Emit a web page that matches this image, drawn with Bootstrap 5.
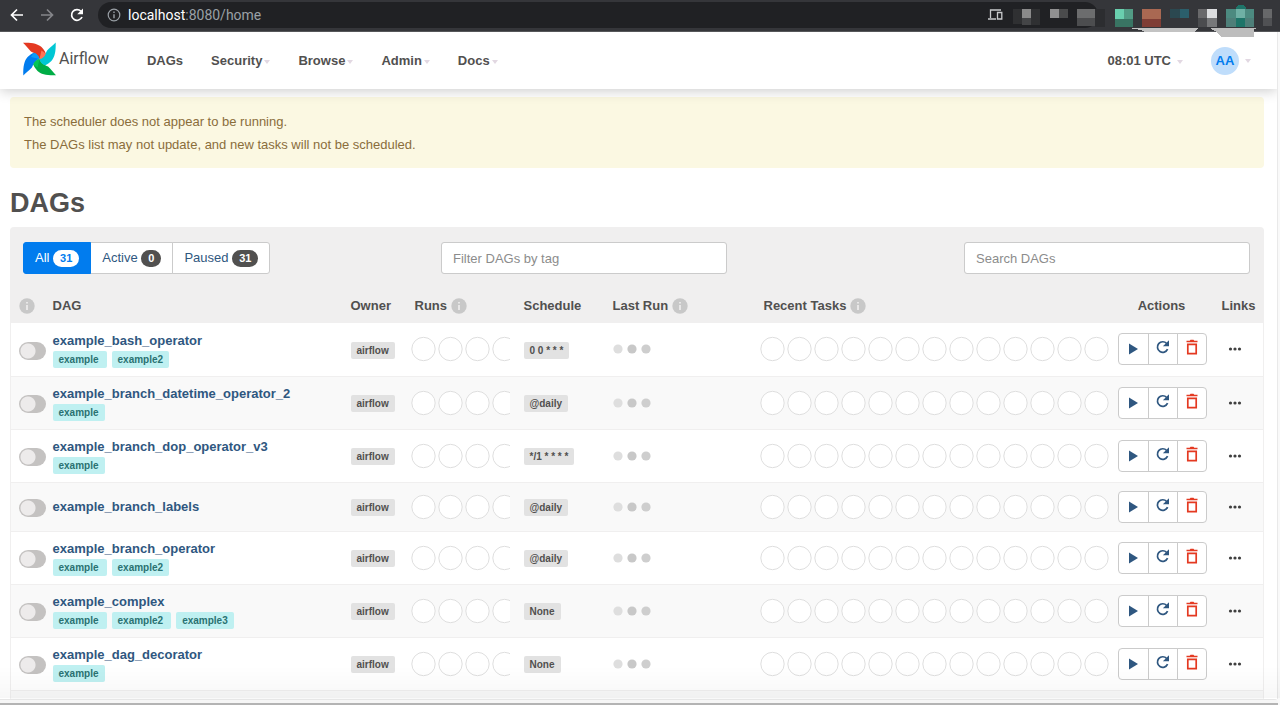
<!DOCTYPE html>
<html lang="en">
<head>
<meta charset="utf-8">
<meta name="viewport" content="width=device-width, initial-scale=1">
<title>DAGs - Airflow</title>
<link href="https://cdn.jsdelivr.net/npm/bootstrap@5.3.0/dist/css/bootstrap.min.css" rel="stylesheet">
<style>
  body { font-family: "Liberation Sans", Arial, sans-serif; font-size: 13px; line-height: 18px; color: #51504f; background: #f9f9f9; }
  a { color: #2f5780; text-decoration: none; }

  /* browser bar */
  .browser-bar { height: 32px; background: #35363a; padding-left: 9px; border-bottom: 1px solid #56575a; }
  .browser-bar .tool { border: 0; background: none; padding: 0; width: 16px; height: 16px; line-height: 0; }
  .address { background: #202124; border-radius: 13px; height: 26px; margin: 2px 182px 2px 13px; padding: 0 95px 0 9px; }
  .url-text { font: 14px/18px Roboto, sans-serif; color: #9aa0a6; margin-left: 7px; }
  .url-text b { color: #fff; font-weight: 400; }
  .extensions { top: 0; right: 0; z-index: 1040; }

  /* page frame */
  .page { margin-right: 2px; border-right: 1px solid #e9e9e9; background: #fff; }
  .topbar { height: 57px; padding: 0 12px 0 23px; background: #fff; box-shadow: 0 2px 12px rgba(0,0,0,.2); z-index: 10; clip-path: inset(0 0 -16px 0); }
  .topbar .navbar-brand { font: 16px/20px Roboto, sans-serif; color: #51504f; margin-right: 24px; padding: 0 0 4px; gap: 3px; }
  .topbar .navbar-nav .nav-link { color: #51504f; font-weight: 700; padding: 0 14px; }
  .topbar .dropdown-toggle::after { border-top: 4px solid #e2d8e2; border-left: 3px solid transparent; border-right: 3px solid transparent; margin-left: 2px; vertical-align: 1px; }
  .topbar .account .dropdown-toggle::after { margin-left: 6px; }
  .avatar { width: 28px; height: 28px; border-radius: 50%; background: #bfddfb; color: #017cee; }
  .content-area { padding: 8px 13px 0 10px; }
  .notice { background: #fbf8e2; color: #8a6d3b; border-radius: 4px; padding: 13px 14px 12px; line-height: 23px; }
  .page-title { font-size: 27px; line-height: 30px; font-weight: 700; margin: 20px 0 9px; color: #51504f; }

  /* list panel */
  .panel-box { background: #f0efef; border-radius: 4px 4px 0 0; }
  .filters { padding: 15px 0 14px; }
  .filters > div { padding: 0 14px 0 13px; }
  .filters .form-control { width: 286px; height: 32px; font-size: 13px; line-height: 18px; padding: 6px 11px; border-color: #cbcbcb; border-radius: 3px; }
  .filters .form-control::placeholder { color: #8c8c8c; }
  .filters .btn { font-size: 13px; line-height: 18px; padding: 6px 11px; border: 1px solid #cbcbcb; border-radius: 3px; background: #fff; color: #2f5780; height: 32px; white-space: nowrap; }
  .filters .btn.active { background: #017cee; border-color: #017cee; color: #fff; }
  .filters .badge { background: #51504f; color: #fff; font-size: 11px; line-height: 17px; padding: 0 7px; border-radius: 9px; top: 0; }
  .filters .btn.active .badge { background: #fff; color: #017cee; }

  .dag-table { table-layout: fixed; border-left: 1px solid #f0efef; border-right: 1px solid #f0efef; color: #51504f; }
  .dag-table th, .dag-table td { padding: 0 8px; vertical-align: middle; }
  .dag-table thead th { background: #f0efef; height: 35px; font-weight: 700; white-space: nowrap; }
  .dag-table tbody tr { height: 53px; background: #fff; border-bottom: 1px solid #f0efef; }
  .dag-table tbody tr:nth-child(even) { background: #f9f9f9; }
  .dag-table tbody tr.untagged { height: 49px; }
  .dag-table tbody tr.next-row { height: 9px; border: 0; }
  .dag-table svg { display: block; }
  .dag-name { font-weight: 700; display: block; margin-top: 1px; }
  .tag-label, .chip { display: inline-block; font-size: 10px; line-height: 17px; font-weight: 700; padding: 0 6px; border-radius: 2px; }
  .tag-label { background: #bff0f1; color: #2a7272; margin-right: 5px; }
  .tag-label:not(:last-child) { padding-right: 8px; }
  .chip { background: #e2e2e2; color: #51504f; margin-top: 2px; }
  .tags { display: flex; margin-top: 1px; }
  .dag-table .pause { appearance: none; display: block; width: 27px; height: 18px; border-radius: 9px; margin: 3px 0 0; border: 0; background: radial-gradient(circle at 9px 9px, #edebeb 7px, #c4c2c1 8px); }
  .actions .btn { padding: 0; width: 30px; height: 32px; border: 1px solid #cbcbcb; border-radius: 4px; background: #fff; color: #2f5780; display: flex; align-items: center; justify-content: center; }
  .actions .btn:first-child { width: 31px; }
  .actions .btn.remove { color: #e43921; }
  .links-toggle { border: 0; background: none; padding: 0 6px; }
  .window-edge { height: 7px; background: linear-gradient(#e6e6e6 1px, #f6f6f6 1px 4px, #b4b4b4 4px); border-radius: 0 4px 0 0; margin-right: 2px; }
  .edge-shade { position: fixed; left: 0; right: 0; bottom: 7px; height: 32px; background: linear-gradient(rgba(0,0,0,0), rgba(0,0,0,.03)); pointer-events: none; }
</style>
</head>
<body>
<svg class="position-absolute" width="0" height="0" aria-hidden="true">
  <symbol id="info" viewBox="0 0 16 16"><circle cx="8" cy="8" r="7.7" fill="#c8c8c8"/><path d="M7.2 4h1.6v1.6H7.2zM7.2 7h1.6v5H7.2z" fill="#f0efef"/></symbol>
  <symbol id="play" viewBox="0 0 20 20"><path d="M6 4.5v11l9-5.500z" fill="currentColor"/></symbol>
  <symbol id="refresh" viewBox="0 1 20 20"><path d="M14.600 11.200A5.300 5.300 0 1 1 13.700 5.500" fill="none" stroke="currentColor" stroke-width="1.700"/><path d="M16 2.200V8.300H9.900z" fill="currentColor"/></symbol>
  <symbol id="trash" viewBox="0 1 20 20"><path d="M5.800 6.300h8.400v9.400H5.800z" fill="none" stroke="currentColor" stroke-width="1.700"/><path d="M4.500 2.700h3.200l.8-.9h3l.8.9h3.200v1.500h-11z" fill="currentColor"/></symbol>
  <symbol id="dots" viewBox="0 0 14 6"><g fill="#3f3f3f"><circle cx="2.500" cy="3" r="1.600"/><circle cx="7" cy="3" r="1.600"/><circle cx="11.500" cy="3" r="1.600"/></g></symbol>
  <symbol id="loading" viewBox="0 0 38 10"><g fill="#c8c8c8"><circle cx="5" cy="5" r="4.600" fill="#dedede"/><circle cx="19" cy="5" r="4.600"/><circle cx="33" cy="5" r="4.600" fill="#cecece"/></g></symbol>
  <pattern id="rings" width="27" height="26" patternUnits="userSpaceOnUse"><circle cx="12.500" cy="13" r="11.700" fill="#fff" stroke="#dedede"/></pattern>
  <symbol id="back" viewBox="0 0 16 16"><path d="M14 8H3M8 2.500 2.500 8 8 13.500" fill="none" stroke="currentColor" stroke-width="1.700"/></symbol>
</svg>

<div class="browser-bar d-flex align-items-start position-relative">
  <div class="d-flex align-items-center" style="gap:14px;padding-top:7px">
    <button class="tool text-white" aria-label="Back"><svg width="16" height="16"><use href="#back"/></svg></button>
    <button class="tool" aria-label="Forward"><svg width="16" height="16" color="#85868a"><use href="#back" transform="rotate(180 8 8)"/></svg></button>
    <button class="tool" aria-label="Reload"><svg width="16" height="16" viewBox="0 0 16 16"><path d="M13 10A5.400 5.400 0 1 1 12 4.300" fill="none" stroke="#fff" stroke-width="1.700"/><path d="M14 1.500v5.800H8.200z" fill="#fff"/></svg></button>
  </div>
  <div class="address flex-grow-1 d-flex align-items-center">
    <svg width="14" height="14" viewBox="0 0 14 14"><circle cx="7" cy="7" r="5.800" fill="none" stroke="#9aa0a6" stroke-width="1.200"/><path d="M7 6.200v4M7 3.600v1.400" stroke="#9aa0a6" stroke-width="1.400"/></svg>
    <a class="url-text me-auto" href="#"><b>localhost</b>:8080/home</a>
    <svg width="15" height="12" viewBox="0 0 15 12" fill="none" stroke="#c8cacc" stroke-width="1.300"><path d="M13 1H2.500v8M0 10h8M9.500 3.500h4.300V10H9.500z"/></svg>
  </div>
  <svg class="extensions position-absolute" width="300" height="38" viewBox="0 0 300 38" shape-rendering="crispEdges" aria-hidden="true">
    <path d="M33 9h9v15h-9zM51 9h9v16h-9z" fill="#2f3032"/><path d="M42 9h9v9h-9z" fill="#8a8a8a"/><path d="M42 18h9v7h-9z" fill="#444547"/>
    <path d="M70 9h9v9h-9z" fill="#909091"/><path d="M79 9h9v9h-9z" fill="#4a4b4c"/>
    <path d="M97 9h18v9H97z" fill="#6c6d6e"/><path d="M97 18h18v8H97z" fill="#4c4d4f"/><path d="M115 9h10v18h-10z" fill="#2c2d30"/>
    <path d="M135 9h9v10h-9z" fill="#69cfae"/><path d="M144 9h9v10h-9z" fill="#529c85"/><path d="M135 19h18v8h-18z" fill="#397463"/>
    <path d="M162 9h19v10h-19z" fill="#a96852"/><path d="M162 19h19v8h-19z" fill="#7f3d35"/>
    <path d="M190 9h10v9h-10z" fill="#2b4850"/><path d="M200 9h9v9h-9z" fill="#2b5e6b"/>
    <path d="M218 9h9v9h-9z" fill="#69696b"/><path d="M218 18h9v9h-9z" fill="#4b4c4f"/><path d="M227 9h10v9h-10z" fill="#dcdddf"/><path d="M227 18h10v9h-10z" fill="#77787a"/>
    <path d="M246 9h10v9h-10zM265 9h9v9h-9z" fill="#4c8a80"/><path d="M256 9h9v9h-9z" fill="#6fb0a5"/><path d="M256 9q0-4 5-4t5 4z" fill="#1e7569"/><path d="M246 18h28v9h-28z" fill="#4e7f79"/><path d="M256 18h9v9h-9z" fill="#1e7569"/>
    <path d="M283 9h9v9h-9z" fill="#67686a"/><path d="M283 18h9v8h-9z" fill="#505154"/>
    <path d="M148 28h70l-4 4h-49q-5-3-17-4z" fill="#c3c3c3"/><path d="M230 28h48l-4 1v8h-32l-7-6z" fill="#bdbdbd"/>
  </svg>
</div>

<div class="page">
  <nav class="topbar navbar navbar-expand position-relative flex-nowrap">
    <a class="navbar-brand d-flex align-items-center" href="#">
      <svg width="33" height="34" viewBox="0 0 100 100" aria-hidden="true">
        <path id="vane" d="M0 1C28 0 45 4 56 14C62 20 66 26 69 33C66 42 58 48 50 50C47 38 35 32 24 27C16 20 8 8 0 1Z" fill="#e43921"/>
        <path d="M0 1C28 0 45 4 56 14C62 20 66 26 69 33C66 42 58 48 50 50C47 38 35 32 24 27C16 20 8 8 0 1Z" fill="#00c7d4" transform="rotate(90 50 50)"/>
        <path d="M0 1C28 0 45 4 56 14C62 20 66 26 69 33C66 42 58 48 50 50C47 38 35 32 24 27C16 20 8 8 0 1Z" fill="#00ad46" transform="rotate(180 50 50)"/>
        <path d="M0 1C28 0 45 4 56 14C62 20 66 26 69 33C66 42 58 48 50 50C47 38 35 32 24 27C16 20 8 8 0 1Z" fill="#017cee" transform="rotate(270 50 50)"/>
        <path d="M50 50 56 24 69 33Q64 47 50 50" fill="#ff7557"/><path d="M50 50 76 56 67 69Q53 64 50 50" fill="#00c7d4"/><path d="M50 50 44 76 31 67Q36 53 50 50" fill="#04c656"/><path d="M50 50 24 44 33 31Q47 36 50 50" fill="#0c9cf8"/>
      </svg>
      Airflow
    </a>
    <div class="navbar-nav me-auto">
      <a class="nav-link" href="#">DAGs</a>
      <a class="nav-link dropdown-toggle" href="#">Security</a>
      <a class="nav-link dropdown-toggle" href="#">Browse</a>
      <a class="nav-link dropdown-toggle" href="#">Admin</a>
      <a class="nav-link dropdown-toggle" href="#">Docs</a>
    </div>
    <div class="navbar-nav account align-items-center">
      <a class="nav-link dropdown-toggle" href="#">08:01 UTC</a>
      <a class="nav-link dropdown-toggle d-flex align-items-center" href="#"><span class="avatar d-flex align-items-center justify-content-center">AA</span></a>
    </div>
  </nav>

  <main class="content-area">
    <div class="notice" role="alert">The scheduler does not appear to be running.<br>The DAGs list may not update, and new tasks will not be scheduled.</div>
    <h2 class="page-title">DAGs</h2>

    <div class="panel-box">
      <div class="filters row g-0">
        <div class="col-4">
          <div class="btn-group">
            <button class="btn active">All <span class="badge">31</span></button>
            <button class="btn">Active <span class="badge">0</span></button>
            <button class="btn">Paused <span class="badge">31</span></button>
          </div>
        </div>
        <div class="col-4"><input class="form-control" type="text" placeholder="Filter DAGs by tag" aria-label="Filter DAGs by tag"></div>
        <div class="col-4 d-flex justify-content-end"><input class="form-control" type="search" placeholder="Search DAGs" aria-label="Search DAGs"></div>
      </div>
      <table class="dag-table w-100">
        <colgroup><col style="width:34px"><col><col style="width:64px"><col style="width:109px"><col style="width:89px"><col style="width:151px"><col style="width:354px"><col style="width:104px"><col style="width:50px"></colgroup>
        <thead>
          <tr>
            <th><svg width="16" height="16"><use href="#info"/></svg></th>
            <th>DAG</th>
            <th>Owner</th>
            <th><span class="d-flex align-items-center gap-1">Runs <svg width="16" height="16"><use href="#info"/></svg></span></th>
            <th>Schedule</th>
            <th><span class="d-flex align-items-center gap-1">Last Run <svg width="16" height="16"><use href="#info"/></svg></span></th>
            <th><span class="d-flex align-items-center gap-1">Recent Tasks <svg width="16" height="16"><use href="#info"/></svg></span></th>
            <th class="text-center">Actions</th>
            <th>Links</th>
          </tr>
        </thead>
        <tbody id="dag-rows"></tbody>
      </table>
    </div>
  </main>
</div>
<div class="window-edge"></div>
<div class="edge-shade"></div>

<script>
  const dags = [
    ["example_bash_operator", ["example", "example2"], "0 0 * * *"],
    ["example_branch_datetime_operator_2", ["example"], "@daily"],
    ["example_branch_dop_operator_v3", ["example"], "*/1 * * * *"],
    ["example_branch_labels", [], "@daily"],
    ["example_branch_operator", ["example", "example2"], "@daily"],
    ["example_complex", ["example", "example2", "example3"], "None"],
    ["example_dag_decorator", ["example"], "None"]
  ];
  const rings = width => `<svg width="${width}" height="26"><rect width="${width}" height="26" fill="url(#rings)"/></svg>`;
  const icon = name => `<svg width="20" height="20"><use href="#${name}"/></svg>`;
  document.getElementById("dag-rows").innerHTML = dags.map(([name, tags, schedule]) => `
    <tr class="${tags.length ? "" : "untagged"}">
      <td><input class="pause" type="checkbox" role="switch" aria-label="Toggle ${name}"></td>
      <td><a class="dag-name" href="#">${name}</a>${tags.length ? `<div class="tags">${tags.map(t => `<a class="tag-label" href="#">${t}</a>`).join("")}</div>` : ""}</td>
      <td><a class="chip" href="#">airflow</a></td>
      <td class="px-1">${rings(99)}</td>
      <td><a class="chip" href="#">${schedule}</a></td>
      <td><svg width="38" height="10"><use href="#loading"/></svg></td>
      <td class="px-1">${rings(350)}</td>
      <td><div class="btn-group actions">
        <button class="btn" aria-label="Trigger DAG">${icon("play")}</button>
        <button class="btn" aria-label="Refresh DAG">${icon("refresh")}</button>
        <button class="btn remove" aria-label="Delete DAG">${icon("trash")}</button>
      </div></td>
      <td><button class="links-toggle d-block" aria-label="Links"><svg width="14" height="6"><use href="#dots"/></svg></button></td>
    </tr>`).join("") + '<tr class="next-row"><td colspan="9"></td></tr>';
</script>
<script src="https://cdn.jsdelivr.net/npm/bootstrap@5.3.0/dist/js/bootstrap.bundle.min.js"></script>
</body>
</html>
